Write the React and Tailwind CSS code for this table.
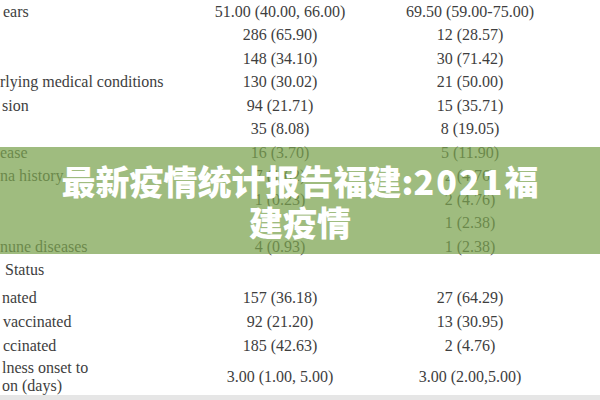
import React from "react";

const rows = [
  { label: "ears", pl: "pl-[3px]", a: "51.00 (40.00, 66.00)", b: "69.50 (59.00-75.00)" },
  { label: "", a: "286 (65.90)", b: "12 (28.57)" },
  { label: "", a: "148 (34.10)", b: "30 (71.42)" },
  { label: "rlying medical conditions", pl: "pl-0", a: "130 (30.02)", b: "21 (50.00)" },
  { label: "sion", pl: "pl-[2px]", a: "94 (21.71)", b: "15 (35.71)" },
  { label: "", a: "35 (8.08)", b: "8 (19.05)" },
  { label: "ease", pl: "pl-0", a: "16 (3.70)", b: "5 (11.90)" },
  { label: "na history", pl: "pl-0", a: "7 (1.62)", b: "2 (4.76)" },
  { label: "", a: "1 (0.23)", b: "2 (4.76)" },
  { label: "", a: "", b: "1 (2.38)" },
  { label: "nune diseases", pl: "pl-0", a: "4 (0.93)", b: "1 (2.38)" },
  { label: "Status", pl: "pl-[5px]", a: "", b: "" },
];

const rows2 = [
  { label: "nated", pl: "pl-[2px]", a: "157 (36.18)", b: "27 (64.29)" },
  { label: "vaccinated", pl: "pl-[3px]", a: "92 (21.20)", b: "13 (30.95)" },
  { label: "ccinated", pl: "pl-[3px]", a: "185 (42.63)", b: "2 (4.76)" },
];

function Row({ r, h }) {
  return (
    <div className={`grid grid-cols-[180px_200px_180px] items-center ${h}`}>
      <div className={`${r.pl || ""} whitespace-nowrap`}>{r.label}</div>
      <div className="text-center whitespace-nowrap">{r.a}</div>
      <div className="text-center whitespace-nowrap">{r.b}</div>
    </div>
  );
}

export default function App() {
  return (
    <div className="relative w-[600px] h-[400px] overflow-hidden bg-white">
      <div className="flex flex-col text-[16px] leading-none text-[#3e3e3e] font-['Liberation_Serif',serif]">
        {rows.map((r, i) => (
          <Row key={i} r={r} h="h-[23.5px]" />
        ))}
        <div className="h-[4px]" />
        {rows2.map((r, i) => (
          <Row key={i} r={r} h="h-[24px]" />
        ))}
        <div className="grid grid-cols-[180px_200px_180px] items-center h-[37px]">
          <div className="pl-[2px] leading-[18px]">
            <div>lness onset to</div>
            <div>on (days)</div>
          </div>
          <div className="text-center whitespace-nowrap">3.00 (1.00, 5.00)</div>
          <div className="text-center whitespace-nowrap">3.00 (2.00,5.00)</div>
        </div>
        <div className="h-[6px] bg-[#e6e6e6]" />
      </div>

      <div className="absolute left-0 right-0 top-[147px] h-[107px] bg-[rgba(124,163,80,0.73)] flex items-center justify-center">
        <div className="text-center text-white font-black text-[34px] leading-[41px] font-['Noto_Sans_CJK_SC','Noto_Sans',sans-serif]">
          最新疫情统计报告福建:<span className="tracking-[2px]">2021</span>福
          <br />
          建疫情
        </div>
      </div>
    </div>
  );
}
